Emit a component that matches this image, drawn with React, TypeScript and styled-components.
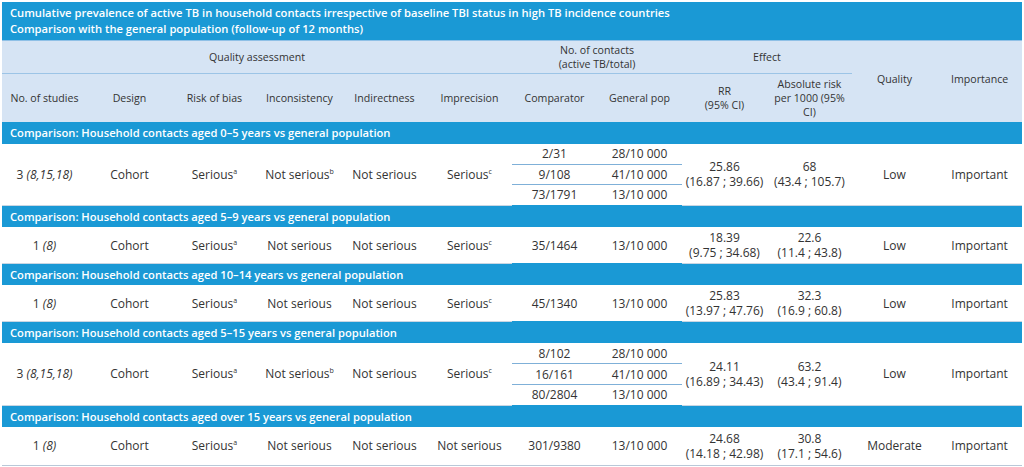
import React from 'react'
import { createGlobalStyle, styled } from 'styled-components'

const GlobalStyle = createGlobalStyle`
  body {
    margin: 0;
    background: #fff;
    font-family: 'Open Sans', 'Noto Sans', sans-serif;
    color: #333;
  }
`;

const BLUE = '#1a99d5';
const PALE = '#d6e4f4';

type Row = {
  studies: string;
  refs: string;
  incons: string;
  incFoot?: string;
  imprec: string;
  impFoot?: string;
  counts: [string, string][];
  rr: [string, string];
  abs: [string, string];
  quality: string;
};

const groups: { title: string; row: Row }[] = [
  {
    title: 'Comparison: Household contacts aged 0–5 years vs general population',
    row: {
      studies: '3', refs: '(8,15,18)', incons: 'Not serious', incFoot: 'b', imprec: 'Serious', impFoot: 'c',
      counts: [['2/31', '28/10 000'], ['9/108', '41/10 000'], ['73/1791', '13/10 000']],
      rr: ['25.86', '(16.87 ; 39.66)'], abs: ['68', '(43.4 ; 105.7)'], quality: 'Low',
    },
  },
  {
    title: 'Comparison: Household contacts aged 5–9 years vs general population',
    row: {
      studies: '1', refs: '(8)', incons: 'Not serious', imprec: 'Serious', impFoot: 'c',
      counts: [['35/1464', '13/10 000']],
      rr: ['18.39', '(9.75 ; 34.68)'], abs: ['22.6', '(11.4 ; 43.8)'], quality: 'Low',
    },
  },
  {
    title: 'Comparison: Household contacts aged 10–14 years vs general population',
    row: {
      studies: '1', refs: '(8)', incons: 'Not serious', imprec: 'Serious', impFoot: 'c',
      counts: [['45/1340', '13/10 000']],
      rr: ['25.83', '(13.97 ; 47.76)'], abs: ['32.3', '(16.9 ; 60.8)'], quality: 'Low',
    },
  },
  {
    title: 'Comparison: Household contacts aged 5–15 years vs general population',
    row: {
      studies: '3', refs: '(8,15,18)', incons: 'Not serious', incFoot: 'b', imprec: 'Serious', impFoot: 'c',
      counts: [['8/102', '28/10 000'], ['16/161', '41/10 000'], ['80/2804', '13/10 000']],
      rr: ['24.11', '(16.89 ; 34.43)'], abs: ['63.2', '(43.4 ; 91.4)'], quality: 'Low',
    },
  },
  {
    title: 'Comparison: Household contacts aged over 15 years vs general population',
    row: {
      studies: '1', refs: '(8)', incons: 'Not serious', imprec: 'Not serious',
      counts: [['301/9380', '13/10 000']],
      rr: ['24.68', '(14.18 ; 42.98)'], abs: ['30.8', '(17.1 ; 54.6)'], quality: 'Moderate',
    },
  },
];

export default function App() {
  return (
    <Page>
      <GlobalStyle />
      <Table>
        <colgroup>
          {Array.from({ length: 12 }).map((_, i) => <col key={i} style={{ width: 85 }} />)}
        </colgroup>
        <thead>
          <tr>
            <Caption colSpan={12}>
              Cumulative prevalence of active TB in household contacts irrespective of baseline TBI status in high TB incidence countries
              <br />
              Comparison with the general population (follow-up of 12 months)
            </Caption>
          </tr>
          <HeadRow $h={33}>
            <Th colSpan={6} $rule>Quality assessment</Th>
            <Th colSpan={2} $rule>No. of contacts<br />(active TB/total)</Th>
            <Th colSpan={2} $rule>Effect</Th>
            <Th rowSpan={2} $nudge>Quality</Th>
            <Th rowSpan={2} $nudge>Importance</Th>
          </HeadRow>
          <HeadRow $h={48}>
            <Th>No. of studies</Th>
            <Th>Design</Th>
            <Th>Risk of bias</Th>
            <Th>Inconsistency</Th>
            <Th>Indirectness</Th>
            <Th>Imprecision</Th>
            <Th>Comparator</Th>
            <Th>General pop</Th>
            <Th>RR<br />(95% CI)</Th>
            <Th>Absolute risk<br />per 1000 (95%<br />CI)</Th>
          </HeadRow>
        </thead>
        <tbody>
          {groups.map((g, gi) => {
            const r = g.row;
            const n = r.counts.length;
            const subH = n > 1 ? 20.6 : gi === groups.length - 1 ? 38 : 36;
            return (
              <React.Fragment key={g.title}>
                <tr>
                  <SectionBar colSpan={12}>{g.title}</SectionBar>
                </tr>
                {r.counts.map(([a, b], i) => (
                  <DataRow key={i} $h={subH}>
                    {i === 0 && (
                      <>
                        <Td rowSpan={n}>{r.studies} <i>{r.refs}</i></Td>
                        <Td rowSpan={n}>Cohort</Td>
                        <Td rowSpan={n}>Serious<Sup>a</Sup></Td>
                        <Td rowSpan={n}>{r.incons}{r.incFoot && <Sup>{r.incFoot}</Sup>}</Td>
                        <Td rowSpan={n}>Not serious</Td>
                        <Td rowSpan={n}>{r.imprec}{r.impFoot && <Sup>{r.impFoot}</Sup>}</Td>
                      </>
                    )}
                    <CountCell $split={i < n - 1}>{a}</CountCell>
                    <CountCell $split={i < n - 1}>{b}</CountCell>
                    {i === 0 && (
                      <>
                        <Td rowSpan={n}>{r.rr[0]}<br />{r.rr[1]}</Td>
                        <Td rowSpan={n}>{r.abs[0]}<br />{r.abs[1]}</Td>
                        <Td rowSpan={n}>{r.quality}</Td>
                        <Td rowSpan={n}>Important</Td>
                      </>
                    )}
                  </DataRow>
                ))}
              </React.Fragment>
            );
          })}
        </tbody>
      </Table>
    </Page>
  );
}

/* Styled Components */
const Page = styled.div`
  padding: 2px 2px 0 2px;
`;

const Table = styled.table`
  width: 1020px;
  border-collapse: collapse;
  table-layout: fixed;
  font-size: 11.5px;
`;

const Caption = styled.th`
  background: ${BLUE};
  color: #fff;
  text-align: left;
  font-weight: 600;
  font-size: 11.2px;
  line-height: 16px;
  padding: 3px 8px 3px;
  border-bottom: 1px solid #8fc0e6;
`;

const HeadRow = styled.tr<{ $h: number }>`
  height: ${(p) => p.$h}px;
  background: ${PALE};
`;

const Th = styled.th<{ $rule?: boolean; $nudge?: boolean }>`
  font-weight: 400;
  font-size: 10.6px;
  line-height: 14px;
  color: #333;
  text-align: center;
  vertical-align: middle;
  padding: ${(p) => (p.$nudge ? '0 0 4px' : '0')};
  border-bottom: 1px solid ${(p) => (p.$rule ? '#9cc4e6' : PALE)};
`;

const SectionBar = styled.td`
  background: ${BLUE};
  color: #fff;
  font-weight: 600;
  font-size: 11.2px;
  height: 22px;
  padding: 0 8px;
  box-sizing: border-box;
  text-align: left;
  border-top: 1px solid #c9d6e3;
`;

const DataRow = styled.tr<{ $h: number }>`
  height: ${(p) => p.$h}px;
  &:last-child td {
    border-bottom: 1px solid #b9c8d8;
  }
`;

const Td = styled.td`
  text-align: center;
  vertical-align: middle;
  padding: 0;
  line-height: 15px;
  font-size: 12px;
  color: #333;
  white-space: nowrap;
  i {
    font-style: italic;
  }
`;

const CountCell = styled(Td)<{ $split: boolean }>`
  border-bottom: 1px solid ${(p) => (p.$split ? '#7fb0d8' : 'transparent')};
`;

const Sup = styled.sup`
  font-size: 7px;
  vertical-align: 5px;
  line-height: 0;
`;
